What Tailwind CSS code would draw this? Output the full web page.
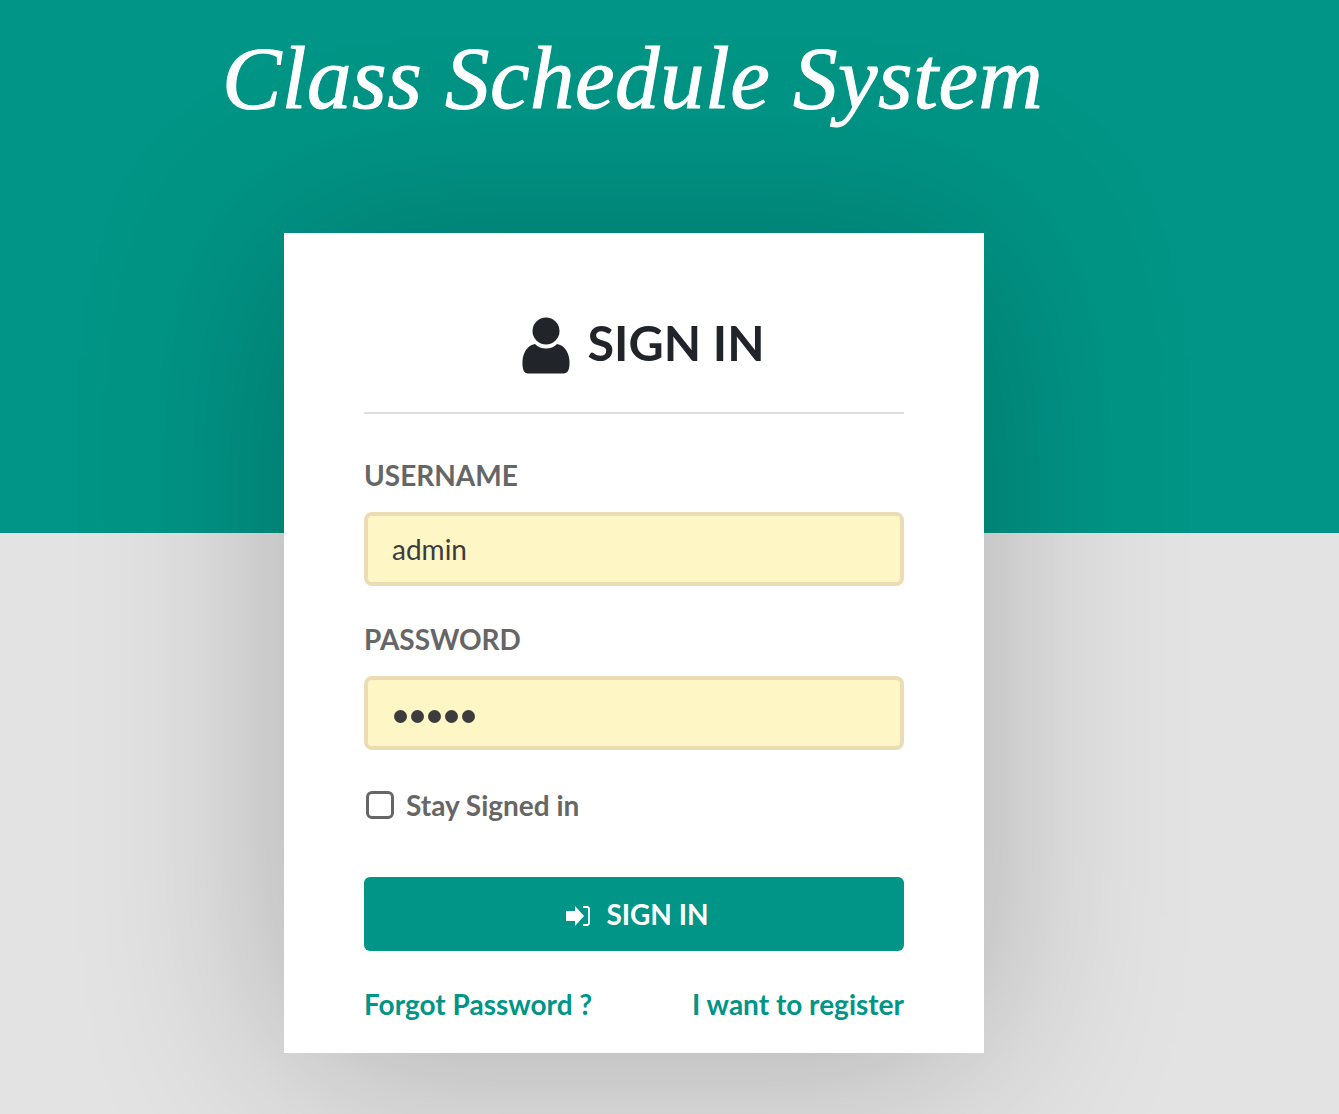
<!DOCTYPE html>
<html lang="en">

<head>
    <meta charset="UTF-8">
    <meta name="viewport" content="width=device-width, initial-scale=1.0">
    <title>Class Schedule System</title>
    <script src="https://cdn.jsdelivr.net/npm/@tailwindcss/browser@4"></script>
</head>

<body class="m-0 p-0 overflow-hidden">

    <div class="h-[1114px] w-full overflow-hidden font-['Lato',sans-serif] bg-[linear-gradient(#009586_533px,#e3e3e3_533px)]">

        <h1 class="h-[233px] pl-[222px] pt-[13px] font-['Liberation_Serif',serif] italic text-[89px] leading-[130px] text-white whitespace-nowrap tracking-[0.5px] [-webkit-text-stroke:1px_white]">Class Schedule System</h1>

        <div class="ml-[284px] w-[700px] h-[820px] bg-white px-[80px] pt-[79px] shadow-[0_10px_190px_rgba(0,0,0,0.24)]">

            <div class="flex items-center justify-center gap-[17px] h-[60px] pl-[19px] text-[#212529]">
                <svg class="w-[48px] h-[57px] mt-[7px]" viewBox="0 0 48 57" fill="currentColor">
                    <circle cx="24" cy="14" r="13.5" />
                    <path d="M13 27c3 3 6.500 4.500 11 4.500S32 30 35 27c7 1 12 8 12.500 17 .3 7 -1 12.500 -6 12.500H6C1.500 56.500 .2 51 .5 44 1 35 6 28 13 27z" />
                </svg>
                <h2 class="text-[48.500px] leading-[60px] font-bold">SIGN IN</h2>
            </div>

            <div class="h-[2px] bg-[#dedede] mt-[40px]"></div>

            <label class="block mt-[43px] text-[28px] leading-[36px] font-bold text-[#666]">USERNAME</label>
            <div class="mt-[19px] h-[74px] flex items-center rounded-[8px] border-[4px] border-[#ecdcb5] bg-[#fff6c5] pl-[24px] text-[28px] text-[#3c3c3c]">admin</div>

            <label class="block mt-[35px] text-[28px] leading-[36px] font-bold text-[#666]">PASSWORD</label>
            <div class="mt-[19px] h-[74px] flex items-center gap-[4px] rounded-[8px] border-[4px] border-[#ecdcb5] bg-[#fff6c5] pl-[26px] pt-[6px]">
                <span class="w-[13px] h-[13px] rounded-full bg-[#3c3c3c]"></span>
                <span class="w-[13px] h-[13px] rounded-full bg-[#3c3c3c]"></span>
                <span class="w-[13px] h-[13px] rounded-full bg-[#3c3c3c]"></span>
                <span class="w-[13px] h-[13px] rounded-full bg-[#3c3c3c]"></span>
                <span class="w-[13px] h-[13px] rounded-full bg-[#3c3c3c]"></span>
            </div>

            <div class="flex items-center mt-[37px] h-[36px] pl-[2px]">
                <span class="w-[28px] h-[28px] rounded-[6px] border-[3px] border-[#666] bg-white"></span>
                <span class="ml-[12px] text-[28px] font-bold text-[#666]">Stay Signed in</span>
            </div>

            <button class="mt-[54px] w-full h-[74px] flex items-center justify-center gap-[16px] pl-[7px] rounded-[6px] bg-[#009586] text-white text-[28px] font-bold">
                <svg class="w-[24px] h-[20px] mt-[4px]" viewBox="0 0 24 20" fill="none">
                    <path d="M0 5h9V0l9 10-9 10v-5H0z" fill="currentColor" />
                    <path d="M17 1h4c1.500 0 2 1 2 2v14c0 1 -.5 2 -2 2h-4" stroke="currentColor" stroke-width="1.800" />
                </svg>
                SIGN IN
            </button>

            <div class="flex justify-between mt-[35px] text-[28px] leading-[36px] font-bold text-[#009586]">
                <a href="#">Forgot Password ?</a>
                <a href="#">I want to register</a>
            </div>
        </div>
    </div>

</body>

</html>
